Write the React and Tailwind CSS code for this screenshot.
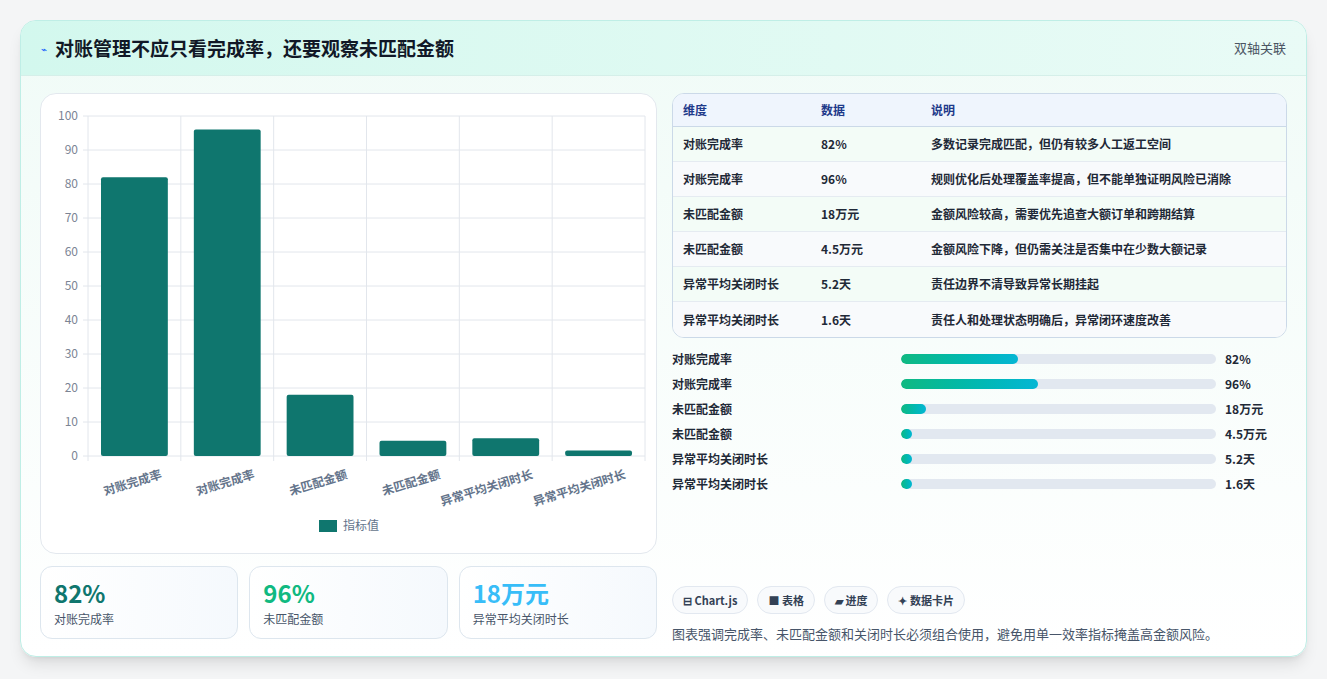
const F = { fontFamily: '"Noto Sans CJK SC", "Noto Sans", sans-serif' };
const rows = [
  ["对账完成率", "82%", "多数记录完成匹配，但仍有较多人工返工空间"],
  ["对账完成率", "96%", "规则优化后处理覆盖率提高，但不能单独证明风险已消除"],
  ["未匹配金额", "18万元", "金额风险较高，需要优先追查大额订单和跨期结算"],
  ["未匹配金额", "4.5万元", "金额风险下降，但仍需关注是否集中在少数大额记录"],
  ["异常平均关闭时长", "5.2天", "责任边界不清导致异常长期挂起"],
  ["异常平均关闭时长", "1.6天", "责任人和处理状态明确后，异常闭环速度改善"],
];
const vals = [82, 96, 18, 4.5, 5.2, 1.6];
const prog = [37, 43.5, 8, 3.5, 3.5, 3.5];

function Chart() {
  const x0 = 47, x1 = 604, y0 = 22, y1 = 362;
  const w = (x1 - x0) / 6;
  return (
    <svg width="616" height="460" className="block">
      {[0,10,20,30,40,50,60,70,80,90,100].map(t => {
        const y = y1 - (t / 100) * (y1 - y0);
        return (<g key={t}>
          <line x1={x0 - 5} x2={x1} y1={y} y2={y} stroke="#e2e6ec" />
          <text x={x0 - 10} y={y + 4} textAnchor="end" fontSize="12" fill="#7b8494" style={F}>{t}</text>
        </g>);
      })}
      {[0,1,2,3,4,5,6].map(i => <line key={i} x1={x0 + i * w} x2={x0 + i * w} y1={y0} y2={y1 + 5} stroke="#e2e6ec" />)}
      {vals.map((v, i) => {
        const h = (v / 100) * (y1 - y0);
        return <rect key={i} x={x0 + i * w + 13} y={y1 - h} width={w - 26} height={h} rx="2" fill="#0f766e" />;
      })}
      {rows.map((r, i) => (
        <text key={i} transform={`translate(${x0 + i * w + w / 2 + 28},${y1 + 22}) rotate(-17)`} textAnchor="end" fontSize="12" fontWeight="600" fill="#64748b" style={F}>{r[0]}</text>
      ))}
      <rect x="278" y="426" width="18" height="12" fill="#0f766e" />
      <text x="302" y="436" fontSize="12" fill="#64748b" style={F}>指标值</text>
    </svg>
  );
}

export default function App() {
  return (
    <div className="w-[1327px] h-[679px] bg-[#f4f5f6] p-5 pb-[22px]" style={F}>
      <div className="h-full rounded-2xl border border-[#bfeee6] bg-gradient-to-b from-[#f0fbf7] to-white shadow-lg overflow-hidden flex flex-col">
        <div className="h-[55px] flex items-center justify-between px-5 bg-gradient-to-r from-[#d3f8ee] to-[#e9fbf6] border-b border-[#d5efe9]">
          <div className="flex items-center gap-2">
            <span className="text-[10px] text-blue-600">⌁</span>
            <span className="text-[19px] font-bold text-[#111827]">对账管理不应只看完成率，还要观察未匹配金额</span>
          </div>
          <span className="text-[13px] text-[#4b5563]">双轴关联</span>
        </div>
        <div className="flex gap-[15px] px-[19px] pt-[17px]">
          <div className="w-[617px] flex flex-col gap-3">
            <div className="h-[461px] rounded-2xl border border-[#e3e8ee] bg-white"><Chart /></div>
            <div className="grid grid-cols-3 gap-[11px]">
              {[["82%","text-[#0f766e]"],["96%","text-[#10b981]"],["18万元","text-[#38bdf8]"]].map(([v,c],i)=>(
                <div key={i} className="h-[73px] rounded-xl border border-[#dde6ee] bg-gradient-to-r from-white to-[#f5f9fd] px-[13px] pt-[9px]">
                  <div className={`text-[24px] font-bold leading-[34px] ${c}`}>{v}</div>
                  <div className="text-[12px] text-[#475569]">{rows[i*2][0]}</div>
                </div>
              ))}
            </div>
          </div>
          <div className="flex-1 flex flex-col">
            <div className="rounded-xl border border-[#cbd9e8] overflow-hidden bg-white">
              <div className="flex h-[33px] items-center bg-[#eff5fd] border-b border-[#cbd9e8] text-[12px] font-bold text-[#1e3a8a]">
                <div className="w-[148px] pl-[10px]">维度</div><div className="w-[110px]">数据</div><div>说明</div>
              </div>
              {rows.map((r, i) => (
                <div key={i} className={`flex h-[35px] items-center text-[12px] font-semibold text-[#1f2937] ${i<5?"border-b border-[#e5ebf1]":""} ${i%2?"bg-[#f8fafc]":"bg-[#f3fcf7]"}`}>
                  <div className="w-[148px] pl-[10px]">{r[0]}</div><div className="w-[110px]">{r[1]}</div><div>{r[2]}</div>
                </div>
              ))}
            </div>
            <div className="mt-[8px] flex flex-col">
              {rows.map((r, i) => (
                <div key={i} className="h-[25px] flex items-center text-[12px] font-semibold text-[#1f2937]">
                  <div className="w-[229px]">{r[0]}</div>
                  <div className="w-[315px] h-[10px] rounded-full bg-[#e2e8f0] overflow-hidden">
                    <div className="h-full rounded-full bg-gradient-to-r from-[#10b981] to-[#06b6d4]" style={{ width: prog[i] + "%" }} />
                  </div>
                  <div className="ml-[9px] font-bold">{r[1]}</div>
                </div>
              ))}
            </div>
            <div className="mt-[90px] flex gap-[9px]">
              {["⊟ Chart.js","■ 表格","▰ 进度","✦ 数据卡片"].map(t=>(
                <div key={t} className="h-[28px] px-[10px] flex items-center rounded-full border border-[#e2e8f0] bg-[#f8fafc] text-[11px] font-bold text-[#334155]">{t}</div>
              ))}
            </div>
            <div className="mt-[10px] text-[13px] text-[#475569]">图表强调完成率、未匹配金额和关闭时长必须组合使用，避免用单一效率指标掩盖高金额风险。</div>
          </div>
        </div>
      </div>
    </div>
  );
}
